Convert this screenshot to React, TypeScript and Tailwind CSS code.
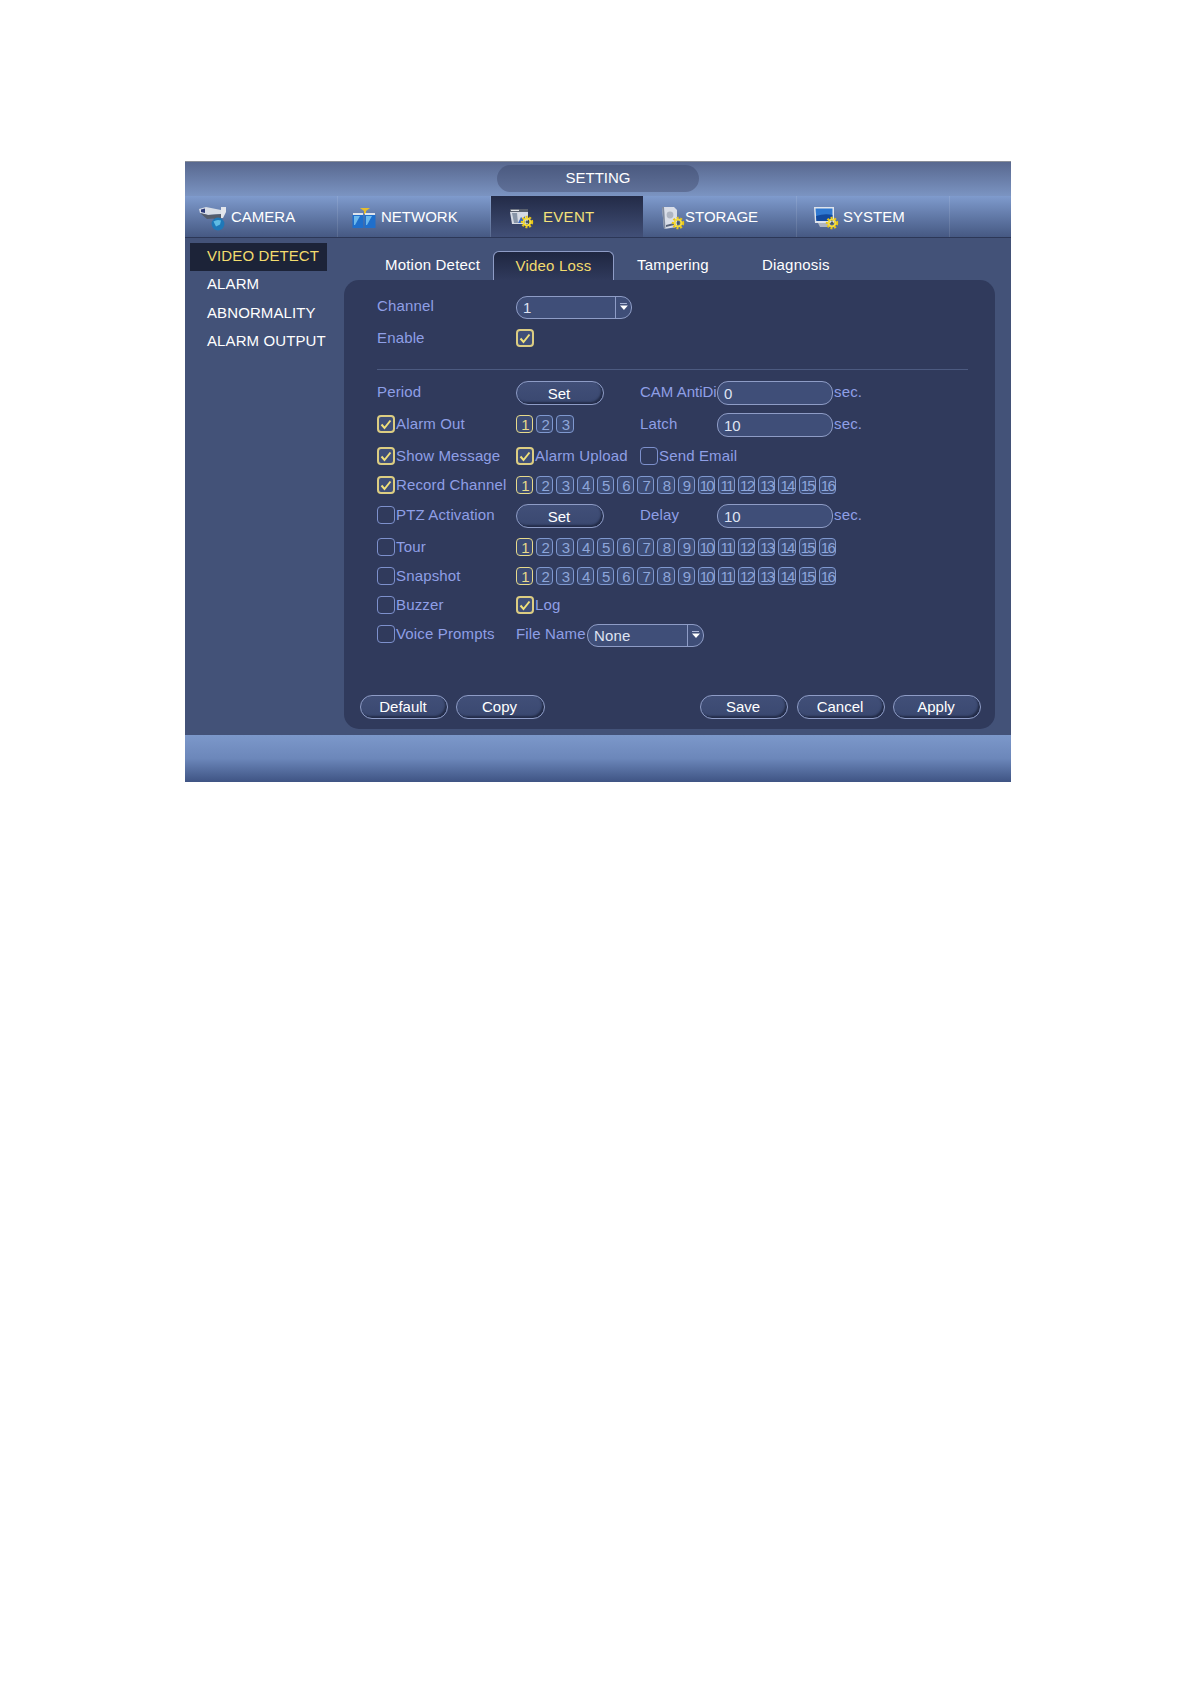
import { ReactNode } from "react";

const Gear = ({ x, y }: { x: number; y: number }) => (
  <g>
    <circle cx={x} cy={y} r="5" fill="none" stroke="#e8c416" strokeWidth="2.4" strokeDasharray="2 1.6" />
    <circle cx={x} cy={y} r="3.4" fill="none" stroke="#f4dc3c" strokeWidth="2" />
    <circle cx={x} cy={y} r="1.4" fill="#4a5a60" />
  </g>
);

const CameraIcon = () => (
  <svg width="29" height="25" viewBox="0 0 29 25">
    <path d="M1 3 L8 1 L23 4 L24 8 L10 9 L2 7 Z" fill="#d8dde6" />
    <path d="M2 7 L10 9 L24 8 L23 12 L9 13 Z" fill="#565d6b" />
    <path d="M3 3.5 L7 2.5 L7 7 L3 6 Z" fill="#2c3a78" />
    <path d="M23 1 H28 V6 L25 12 L23 12 Z" fill="#e3e6ec" />
    <path d="M15 12 L22 11 L19 15 Z" fill="#59606c" />
    <circle cx="20" cy="18" r="6.4" fill="#1f78b8" />
    <path d="M15.5 15.5 Q19 13 23 14.5 L22 18.5 L18 20.5 Z" fill="#5fbce4" />
  </svg>
);

const NetworkIcon = () => (
  <svg width="24" height="21" viewBox="0 0 24 21">
    <path d="M8 0 H18 L14 3 V6 H12 V3 Z" fill="#e6bd2c" />
    <path d="M1 5 H11 V7 H1 Z M13 5 H23 V7 H13 Z" fill="#dfe4ec" />
    <rect x="0.5" y="7" width="11" height="13" fill="#1f6fcc" />
    <rect x="12.5" y="7" width="11" height="13" fill="#1f6fcc" />
    <path d="M2 8 H8 L3 17 H2 Z M14 8 H20 L15 17 H14 Z" fill="#6cb8ec" />
  </svg>
);

const EventIcon = () => (
  <svg width="25" height="21" viewBox="0 0 25 21">
    <path d="M1 1 H19 V4 H1 Z" fill="#59606e" />
    <path d="M2 1.8 H10 V3 H2 Z" fill="#e2e4e8" />
    <path d="M1 4 H19 V16 H3 Z" fill="#d5dae4" />
    <path d="M3 5 H8 L9 15 H5 Z" fill="#8895a8" />
    <path d="M9 15 L12 9 L14 11 L16 8 V15 Z" fill="#3b69c0" />
    <Gear x={18} y={14} />
  </svg>
);

const StorageIcon = () => (
  <svg width="24" height="23" viewBox="0 0 24 23">
    <path d="M1 0 H13 L16 3 V20 L3 22 Z" fill="#d9dee8" />
    <path d="M1 0 L3 22 L4.5 21.8 L3 0 Z" fill="#7f8a9e" />
    <circle cx="9" cy="8" r="3.4" fill="#aeb5c2" />
    <path d="M5 18 L13 16 V18 L5 20 Z" fill="#59647a" />
    <Gear x={17} y={16} />
  </svg>
);

const SystemIcon = () => (
  <svg width="26" height="23" viewBox="0 0 26 23">
    <path d="M1 0 H21 V16 H2 Z" fill="#dfe4ec" />
    <path d="M2.5 1.5 H19.5 V14 H3.5 Z" fill="#2f78d0" />
    <path d="M3 9 Q12 6 19.5 8 V14 H3.5 Z" fill="#134a9e" />
    <path d="M5 16 H15 L17 20 H7 Z" fill="#aeb5c2" />
    <Gear x={19} y={16} />
  </svg>
);

const mainTabs = [
  { label: "CAMERA", icon: <CameraIcon />, cls: "w-[153px] pl-[13px] gap-[4px]" },
  { label: "NETWORK", icon: <NetworkIcon />, cls: "w-[153px] pl-[14px] gap-[5px]" },
  { label: "EVENT", icon: <EventIcon />, cls: "w-[152px] pl-[18px] gap-[9px]", active: true },
  { label: "STORAGE", icon: <StorageIcon />, cls: "w-[154px] pl-[18px] gap-[0px]" },
  { label: "SYSTEM", icon: <SystemIcon />, cls: "w-[153px] pl-[16px] gap-[4px]" },
];

const Check = () => (
  <svg width="12" height="11" viewBox="0 0 12 11" fill="none">
    <path d="M1.5 5.5 L4.5 9 L10.5 1.5" stroke="#f0e07a" strokeWidth="2" />
  </svg>
);

const Checkbox = ({ on = false }: { on?: boolean }) => (
  <span
    className={`flex h-[18px] w-[18px] shrink-0 items-center justify-center rounded-[4px] ${
      on ? "border-2 border-[#dccd82] bg-[#3f4e78]" : "border-[1.5px] border-[#7d90cc]"
    }`}
  >
    {on && <Check />}
  </span>
);

const Label = ({ children, className = "" }: { children: ReactNode; className?: string }) => (
  <span className={`mb-[2px] whitespace-nowrap tracking-[0.15px] text-[#8f9fe6] ${className}`}>{children}</span>
);

const CheckLabel = ({ on, text, className = "" }: { on?: boolean; text: string; className?: string }) => (
  <span className={`flex items-center gap-[1px] ${className}`}>
    <Checkbox on={on} />
    <Label>{text}</Label>
  </span>
);

const Numbers = ({ count = 16 }: { count?: number }) => (
  <span className="flex gap-[3px]">
    {Array.from({ length: count }, (_, i) => (
      <span
        key={i}
        className={`flex h-[17.5px] w-[17.2px] items-center justify-center rounded-[4px] border-[1.5px] bg-[#3c4b74] text-[15px] tracking-[-1.8px] ${
          i === 0 ? "border-[#e6d98a] text-[#e6d98a]" : "border-[#7f98cf] text-[#8ea6da]"
        }`}
      >
        {i + 1}
      </span>
    ))}
  </span>
);

const Pill = ({ children, className = "" }: { children: ReactNode; className?: string }) => (
  <span
    className={`flex h-[24px] items-center justify-center rounded-full border border-[#8e9cc6] bg-gradient-to-b from-[#414f78] to-[#3a4870] pr-[2px] text-white shadow-[inset_-2px_-2px_2px_#232c48] ${className}`}
  >
    {children}
  </span>
);

const Field = ({ value }: { value: string }) => (
  <span className="mt-[2px] flex h-[24px] w-[116px] items-center rounded-[11px] border border-[#8e9cc6] bg-[#3f4e78] pl-[6px] text-[#dfe4f2]">
    {value}
  </span>
);

const Select = ({ value, width, split }: { value: string; width: string; split: string }) => (
  <span className={`mt-[2px] flex h-[23px] items-center rounded-[11px] border border-[#8e9cc6] bg-[#3f4e78] text-[#dfe4f2] ${width}`}>
    <span className={`flex h-full items-center border-r border-[#8e9cc6] pl-[6px] tracking-[0.2px] ${split}`}>{value}</span>
    <svg width="14" height="10" viewBox="0 0 14 10" className="ml-[1px]">
      <path d="M3 1.5 H10" stroke="#aeb8d8" strokeWidth="1" />
      <path d="M3 3.5 H11 L7 8 Z" fill="#ffffff" />
    </svg>
  </span>
);

const Sec = () => <Label className="ml-[1px] tracking-[0.5px]">sec.</Label>;

const rowBase = "flex h-[24px] items-center";

export default function App() {
  return (
    <div className="min-h-[1684px] bg-white pl-[185px] pt-[161px] font-['Liberation_Sans',Arial,sans-serif] text-[15px] leading-none">
      <div className="flex h-[621px] w-[826px] flex-col bg-[#435278]">
        {/* Title bar */}
        <div className="flex h-[35px] justify-center border-t border-[#8a8f99] bg-gradient-to-b from-[#58688f] to-[#7b94c2] pt-[3px]">
          <div className="flex h-[27px] w-[202px] items-center justify-center rounded-full bg-gradient-to-b from-[#4b5a80] to-[#5f7098] pb-[2px] text-white">
            SETTING
          </div>
        </div>

        {/* Main tabs */}
        <div className="flex h-[42px] border-b border-[#2c3757] bg-gradient-to-b from-[#7f9bcd] to-[#465983]">
          {mainTabs.map((tab) => (
            <div
              key={tab.label}
              className={`flex h-full items-center ${tab.cls} ${
                tab.active
                  ? "h-[42px] bg-gradient-to-b from-[#232b47] to-[#414f77] tracking-[0.3px] text-[#f5e27a]"
                  : "border-r border-white/10 text-white"
              }`}
            >
              <span className="mt-[3px]">{tab.icon}</span>
              <span className="pb-[1px]">{tab.label}</span>
            </div>
          ))}
        </div>

        {/* Body */}
        <div className="flex h-[497px]">
          <nav className="w-[159px] pl-[5px] pt-[5px] tracking-[0.1px]">
            <div className="flex h-[28px] w-[137px] items-center bg-[#1c2338] pb-[3px] pl-[17px] text-[#f3dc6e]">VIDEO DETECT</div>
            {["ALARM", "ABNORMALITY", "ALARM OUTPUT"].map((item) => (
              <div key={item} className="flex h-[28.4px] items-center pb-[3px] pl-[17px] text-white">
                {item}
              </div>
            ))}
          </nav>

          <div className="flex w-[651px] flex-col">
            <div className="flex h-[42px] items-end tracking-[0.2px]">
              <span className="mb-[8px] ml-[41px] w-[108px] text-white">Motion Detect</span>
              <span className="flex h-[29px] w-[121px] items-center justify-center rounded-t-[6px] border-x border-t border-[#8e9cc6] bg-gradient-to-b from-[#1f2741] to-[#303a5c] pb-[2px] text-[#f3dc6e]">
                Video Loss
              </span>
              <span className="mb-[8px] ml-[23px] w-[125px] text-white">Tampering</span>
              <span className="mb-[8px] text-white">Diagnosis</span>
            </div>

            <div className="flex h-[449px] flex-col rounded-[15px] bg-[#303a5c] pb-[10px] pl-[33px] pr-[14px] pt-[14px]">
              <div className={rowBase}>
                <Label className="w-[139px]">Channel</Label>
                <Select value="1" width="w-[116px]" split="w-[100px]" />
              </div>
              <div className={`${rowBase} mt-[8px]`}>
                <Label className="w-[139px]">Enable</Label>
                <Checkbox on />
              </div>
              <div className="mt-[19px] h-px w-[591px] bg-[#4c5a80]" />

              <div className={`${rowBase} mt-[10px]`}>
                <Label className="w-[139px]">Period</Label>
                <Pill className="mt-[2px] w-[88px]">Set</Pill>
                <Label className="ml-[36px] w-[77px] tracking-normal">CAM AntiDi</Label>
                <Field value="0" />
                <Sec />
              </div>
              <div className={`${rowBase} mt-[8px]`}>
                <CheckLabel on text="Alarm Out" className="w-[139px]" />
                <span className="w-[124px]">
                  <Numbers count={3} />
                </span>
                <Label className="w-[77px]">Latch</Label>
                <Field value="10" />
                <Sec />
              </div>
              <div className={`${rowBase} mt-[8px]`}>
                <CheckLabel on text="Show Message" className="w-[139px]" />
                <CheckLabel on text="Alarm Upload" className="w-[124px]" />
                <CheckLabel text="Send Email" />
              </div>
              <div className={`${rowBase} mt-[5px]`}>
                <CheckLabel on text="Record Channel" className="w-[139px]" />
                <Numbers />
              </div>
              <div className={`${rowBase} mt-[6px]`}>
                <CheckLabel text="PTZ Activation" className="w-[139px]" />
                <Pill className="mt-[2px] w-[88px]">Set</Pill>
                <Label className="ml-[36px] w-[77px]">Delay</Label>
                <Field value="10" />
                <Sec />
              </div>
              <div className={`${rowBase} mt-[8px]`}>
                <CheckLabel text="Tour" className="w-[139px]" />
                <Numbers />
              </div>
              <div className={`${rowBase} mt-[5px]`}>
                <CheckLabel text="Snapshot" className="w-[139px]" />
                <Numbers />
              </div>
              <div className={`${rowBase} mt-[5px]`}>
                <CheckLabel text="Buzzer" className="w-[139px]" />
                <CheckLabel on text="Log" />
              </div>
              <div className={`${rowBase} mt-[5px]`}>
                <CheckLabel text="Voice Prompts" className="w-[139px]" />
                <Label className="w-[71px]">File Name</Label>
                <Select value="None" width="w-[117px]" split="w-[100px]" />
              </div>

              <div className="-ml-[17px] mt-auto flex">
                <Pill className="w-[88px] pb-[2px]">Default</Pill>
                <Pill className="ml-[8px] w-[89px] pb-[2px]">Copy</Pill>
                <Pill className="ml-auto w-[88px] pb-[2px]">Save</Pill>
                <Pill className="ml-[9px] w-[88px] pb-[2px]">Cancel</Pill>
                <Pill className="ml-[8px] w-[88px] pb-[2px]">Apply</Pill>
              </div>
            </div>
          </div>
        </div>

        {/* Footer */}
        <div className="h-[47px] bg-gradient-to-b from-[#7c98ca] via-[#6c87ba] to-[#3f5484]" />
      </div>
    </div>
  );
}
